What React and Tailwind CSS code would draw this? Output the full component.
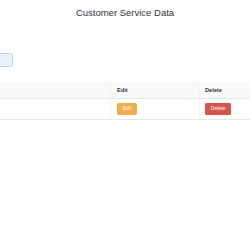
export default function App() {
  return (
    <div className="w-[250px] h-[250px] bg-white overflow-hidden" style={{ fontFamily: '"Liberation Sans", Arial, sans-serif' }}>
      <div className="pt-[7px] text-center text-[9.5px] leading-[12px] text-[#333]">Customer Service Data</div>
      <div className="mt-[34px] flex">
        <div className="w-[13px] h-[14px] bg-[#e8f0fe] border border-l-0 border-[#b9d3f5] rounded-r-[2px]" />
      </div>
      <div className="mt-[15px] w-[250px]">
        <div className="grid grid-cols-[110px_89px_1fr] h-[17px] bg-[#f9f9f9] border-b border-[#e6e6e6] text-[5.6px] font-bold text-[#333]">
          <div />
          <div className="border-l border-[#f3f3f3] pl-[6px] flex items-center">Edit</div>
          <div className="border-l border-[#f3f3f3] pl-[5px] flex items-center">Delete</div>
        </div>
        <div className="grid grid-cols-[110px_89px_1fr] h-[21px] border-b border-[#e6e6e6]">
          <div />
          <div className="border-l border-[#f3f3f3] pl-[6px] flex items-center">
            <div className="w-[20px] h-[12px] bg-[#f0ad4e] rounded-[1.5px] flex items-center justify-center text-white text-[5px]">Edit</div>
          </div>
          <div className="border-l border-[#f3f3f3] pl-[5px] flex items-center">
            <div className="w-[26px] h-[12px] bg-[#d9534f] rounded-[1.5px] flex items-center justify-center text-white text-[5px]">Delete</div>
          </div>
        </div>
      </div>
    </div>
  );
}
